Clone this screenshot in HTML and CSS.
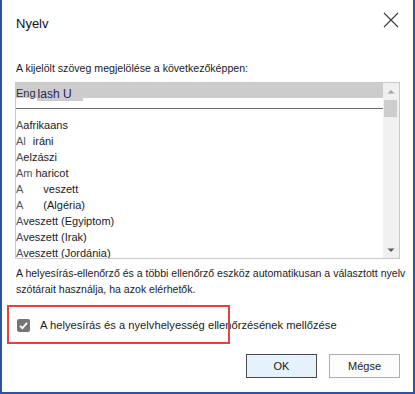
FILE: index.html
```html
<!DOCTYPE html>
<html lang="hu">
<head>
    <meta charset="UTF-8">
    <title>Nyelv</title>
    <link rel="stylesheet" href="styles.css">
</head>
<body>

    <div class="dialog">
        <div class="dialog-header">
            <h1 class="dialog-title">Nyelv</h1>
            <svg class="close-icon" width="16" height="16" viewBox="0 0 16 16">
                <path d="M1 1 L15 15 M15 1 L1 15" stroke="#3a3a3a" stroke-width="1.1" fill="none"/>
            </svg>
        </div>

        <div class="field-label">A kijelölt szöveg megjelölése a következőképpen:</div>

        <div class="listbox">
            <div class="list-items">
                <div class="selected-row">
                    <span class="sel-a">Eng</span><span class="sel-b">lash U</span>
                </div>
                <div class="separator"></div>
                <div class="item"><span class="lead">A</span>afrikaans</div>
                <div class="item"><span class="lead">Al</span><span class="gap-s">iráni</span></div>
                <div class="item"><span class="lead">A</span>elzászi</div>
                <div class="item"><span class="lead">Am</span><span class="gap-xs">haricot</span></div>
                <div class="item"><span class="lead">A</span><span class="gap-l">veszett</span></div>
                <div class="item"><span class="lead">A</span><span class="gap-l">(Algéria)</span></div>
                <div class="item"><span class="lead">A</span>veszett (Egyiptom)</div>
                <div class="item"><span class="lead">A</span>veszett (Irak)</div>
                <div class="item"><span class="lead">A</span>veszett (Jordánia)</div>
            </div>
            <div class="scrollbar">
                <div class="scroll-btn">
                    <svg width="8" height="5" viewBox="0 0 8 5"><path d="M0.5 4.5 L4 1 L7.5 4.5 Z" fill="#a6a6a6"/></svg>
                </div>
                <div class="scroll-thumb"></div>
                <div class="scroll-track"></div>
                <div class="scroll-btn">
                    <svg width="8" height="5" viewBox="0 0 8 5"><path d="M0.5 0.5 L7.5 0.5 L4 4 Z" fill="#5f5f5f"/></svg>
                </div>
            </div>
        </div>

        <p class="description">A helyesírás-ellenőrző és a többi ellenőrző eszköz automatikusan a választott nyelv<br>szótárait használja, ha azok elérhetők.</p>

        <div class="check-row">
            <span class="checkbox">
                <svg width="13" height="13" viewBox="0 0 13 13"><path d="M3 6.8 L5.4 9.2 L10 3.8" stroke="#fff" stroke-width="1.8" fill="none"/></svg>
            </span>
            <span class="check-label">A helyesírás és a nyelvhelyesség ellenőrzésének mellőzése</span>
            <div class="highlight-box"></div>
        </div>

        <div class="buttons">
            <button class="btn btn-default">OK</button>
            <button class="btn">Mégse</button>
        </div>
    </div>

</body>
</html>
```

FILE: styles.css
```css
body {
    margin: 0;
    background: #fff;
    font-family: 'Liberation Sans', Arial, sans-serif;
    color: #1a1a1a;
}

.dialog {
    width: 415px;
    height: 394px;
    box-sizing: border-box;
    border: 2px solid #2b579a;
    border-top: none;
    padding: 0 13px 0 14px;
    overflow: hidden;
}

.dialog-header {
    display: flex;
    justify-content: space-between;
    align-items: flex-start;
    padding-top: 12px;
}

.dialog-title {
    margin: 2px 0 0 0;
    font-size: 13px;
    font-weight: normal;
    line-height: 20px;
    color: #111;
}

.close-icon {
    margin-right: 1px;
}

.field-label {
    margin-top: 26px;
    font-size: 10.6px;
    line-height: 16px;
}

.listbox {
    margin: 6px 0 0 -1px;
    height: 177px;
    box-sizing: border-box;
    border: 1px solid #c9c9c9;
    display: flex;
    overflow: hidden;
}

.list-items {
    flex: 1;
    font-size: 11px;
    line-height: 16px;
}

.selected-row {
    height: 15px;
    background: #cccccc;
    display: flex;
    align-items: flex-start;
}

.sel-a {
    margin-top: 2px;
    color: #333;
}

.sel-b {
    margin-left: 1px;
    padding: 5px 11px 0 1px;
    font-size: 12px;
    line-height: 13px;
    background: #cccccc;
    color: #1e1e5e;
}

.separator {
    margin-top: 10px;
    height: 1px;
    background: #6e6e6e;
}

.separator + .item {
    margin-top: 8px;
}

.item {
    height: 16px;
    white-space: nowrap;
}

.lead {
    color: #555;
}

.gap-xs {
    margin-left: 3px;
}

.gap-s {
    margin-left: 7px;
}

.gap-l {
    margin-left: 20px;
}

.scrollbar {
    width: 16px;
    background: #f0f0f0;
    display: flex;
    flex-direction: column;
}

.scroll-btn {
    height: 16px;
    display: flex;
    align-items: center;
    justify-content: center;
}

.scroll-thumb {
    margin: 1px 2px 0 1px;
    height: 17px;
    background: #cdcdcd;
}

.scroll-track {
    flex: 1;
}

.description {
    margin: 6px 0 0 0;
    font-size: 10.55px;
    line-height: 16px;
    color: #222;
    white-space: nowrap;
}

.check-row {
    position: relative;
    margin-top: 20px;
    display: flex;
    align-items: center;
    height: 16px;
    font-size: 11.2px;
}

.checkbox {
    width: 13px;
    height: 13px;
    margin-left: 1px;
    background: #767676;
    border-radius: 2px;
    display: flex;
}

.check-label {
    margin-left: 10px;
    white-space: nowrap;
}

.highlight-box {
    position: absolute;
    left: -9px;
    top: -12px;
    width: 223px;
    height: 39px;
    box-sizing: border-box;
    border: 2px solid #e8403f;
}

.buttons {
    margin-top: 21px;
    display: flex;
    justify-content: flex-end;
    gap: 12px;
}

.btn {
    width: 71px;
    height: 24px;
    padding: 0;
    font-family: 'Liberation Sans', Arial, sans-serif;
    font-size: 11px;
    color: #1a1a1a;
    background: #fdfdfd;
    border: 1px solid #adadad;
}

.btn-default {
    background: #e5f1fb;
    border-color: #4a4a4a;
}
```
